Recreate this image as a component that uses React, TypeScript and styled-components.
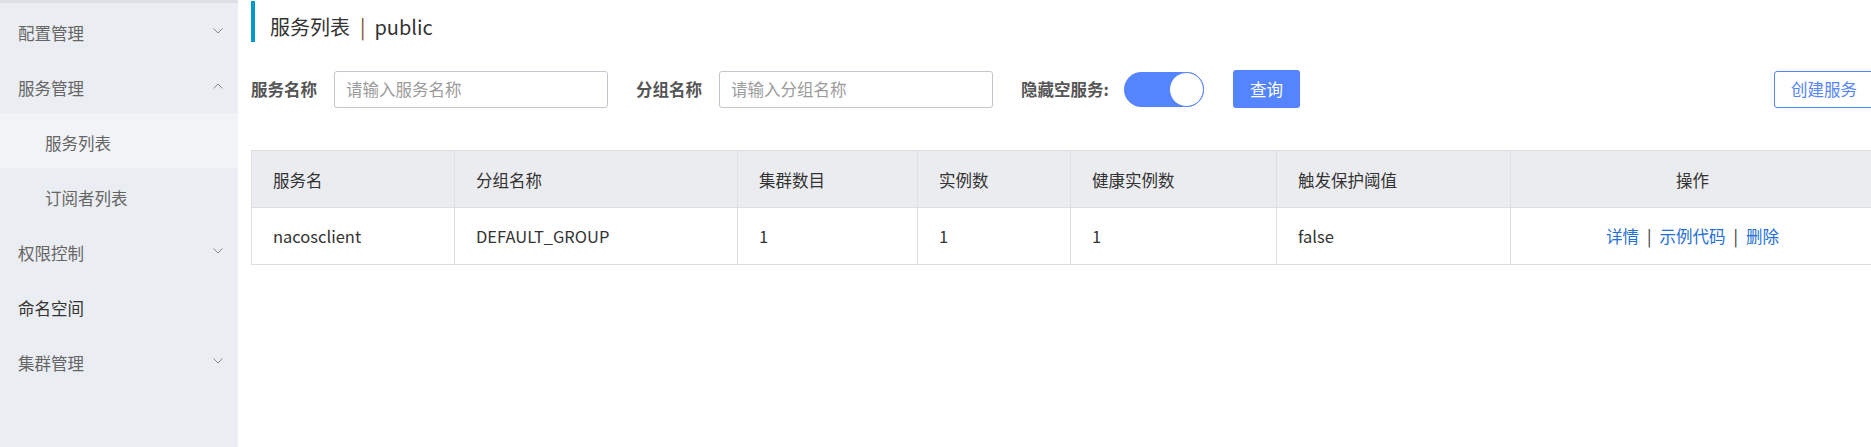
import React from "react";
import styled, { createGlobalStyle } from "styled-components";

const GlobalStyle = createGlobalStyle`
  html, body { margin: 0; padding: 0; background: #fff; overflow: hidden; }
  body { font-family: "Noto Sans CJK SC", "Noto Sans", sans-serif; color: #333; }
  * { box-sizing: border-box; }
`;

const Layout = styled.div`
  display: flex;
  width: 1874px;
  height: 447px;
`;

const Sidebar = styled.nav`
  width: 238px;
  flex: none;
  background: #eaedf1;
  border-top: 3px solid #dcdfe5;
  display: flex;
  flex-direction: column;
`;

const MenuItem = styled.div<{ $sub?: boolean; $active?: boolean; $strong?: boolean }>`
  height: 55px;
  flex: none;
  display: flex;
  align-items: center;
  justify-content: space-between;
  padding: 4px 15px 0 ${(p) => (p.$sub ? 45 : 18)}px;
  background: ${(p) => (p.$active ? "#f2f3f7" : "transparent")};
  font-size: 16.5px;
  color: ${(p) => (p.$strong ? "#333" : "#666")};
  cursor: pointer;
`;

const Chevron = styled.svg`
  width: 10px;
  height: 6px;
  margin-top: -4px;
  flex: none;
`;

const Main = styled.main`
  flex: 1;
  min-width: 0;
  padding: 1px 0 0 13px;
  display: flex;
  flex-direction: column;
`;

const Title = styled.div`
  height: 41px;
  border-left: 4px solid #0099cc;
  padding: 11px 0 0 15px;
  line-height: 30px;
  font-size: 20px;
  color: #333;
  display: flex;
`;

const TitleSep = styled.span`
  margin: 0 9px 0 10px;
  color: #7b4b1e;
`;

const SearchRow = styled.div`
  display: flex;
  align-items: center;
  height: 38px;
  margin-top: 28px;
`;

const Label = styled.span<{ $gap?: number }>`
  font-size: 16.5px;
  font-weight: bold;
  color: #555;
  margin-right: ${(p) => p.$gap ?? 17}px;
  white-space: nowrap;
`;

const Input = styled.input`
  width: 274px;
  height: 37px;
  border: 1px solid #c4c6cf;
  border-radius: 3px;
  padding: 0 11px;
  font-size: 16.5px;
  font-family: inherit;
  color: #333;
  margin-right: 28px;
  outline: none;
  &::placeholder { color: #9c9c9c; }
`;

const Switch = styled.div`
  width: 80px;
  height: 35px;
  border-radius: 18px;
  background: #5584ff;
  display: flex;
  justify-content: flex-end;
  margin-right: 29px;
  flex: none;
`;

const Knob = styled.span`
  width: 35px;
  height: 35px;
  border-radius: 50%;
  background: #fff;
  border: 1px solid #5584ff;
`;

const PrimaryButton = styled.button`
  height: 38px;
  padding: 0 17px;
  background: #5584ff;
  color: #fff;
  border: none;
  border-radius: 3px;
  font-size: 16.5px;
  font-family: inherit;
  flex: none;
`;

const OutlineButton = styled.button`
  margin-left: auto;
  height: 37px;
  padding: 0 16px;
  background: #fff;
  color: #5584ff;
  border: 1px solid #5584ff;
  border-radius: 3px;
  font-size: 16.5px;
  font-family: inherit;
  flex: none;
  white-space: nowrap;
`;

const Table = styled.table`
  margin-top: 42px;
  width: 100%;
  border-collapse: collapse;
  table-layout: fixed;
  font-size: 16.5px;
  color: #333;
`;

const Th = styled.th<{ $center?: boolean }>`
  height: 57px;
  background: #ebecf0;
  border: 1px solid #dcdee3;
  font-weight: normal;
  text-align: ${(p) => (p.$center ? "center" : "left")};
  padding: 2px 21px 0;
  white-space: nowrap;
`;

const Td = styled.td<{ $center?: boolean }>`
  height: 57px;
  border: 1px solid #dcdee3;
  text-align: ${(p) => (p.$center ? "center" : "left")};
  padding: 0 21px;
  white-space: nowrap;
`;

const Link = styled.a`
  color: #2470d8;
  text-decoration: none;
  cursor: pointer;
`;

const LinkSep = styled.span`
  margin: 0 8px;
  color: #333;
`;

const Down = () => (
  <Chevron viewBox="0 0 10 6">
    <polyline points="0.5,0.5 5,5 9.5,0.5" fill="none" stroke="#888" strokeWidth="1" />
  </Chevron>
);

const Up = () => (
  <Chevron viewBox="0 0 10 6">
    <polyline points="0.5,5.5 5,1 9.5,5.5" fill="none" stroke="#888" strokeWidth="1" />
  </Chevron>
);

const colWidths = [203, 283, 180, 153, 206, 234, 364];
const headers = ["服务名", "分组名称", "集群数目", "实例数", "健康实例数", "触发保护阈值"];
const row = ["nacosclient", "DEFAULT_GROUP", "1", "1", "1", "false"];

export default function App() {
  return (
    <>
      <GlobalStyle />
      <Layout>
        <Sidebar>
          <MenuItem>
            配置管理
            <Down />
          </MenuItem>
          <MenuItem>
            服务管理
            <Up />
          </MenuItem>
          <MenuItem $sub $active>服务列表</MenuItem>
          <MenuItem $sub>订阅者列表</MenuItem>
          <MenuItem>
            权限控制
            <Down />
          </MenuItem>
          <MenuItem $strong>命名空间</MenuItem>
          <MenuItem>
            集群管理
            <Down />
          </MenuItem>
        </Sidebar>
        <Main>
          <Title>
            <span>服务列表</span>
            <TitleSep>|</TitleSep>
            <span>public</span>
          </Title>
          <SearchRow>
            <Label>服务名称</Label>
            <Input placeholder="请输入服务名称" />
            <Label>分组名称</Label>
            <Input placeholder="请输入分组名称" />
            <Label $gap={15}>隐藏空服务:</Label>
            <Switch>
              <Knob />
            </Switch>
            <PrimaryButton>查询</PrimaryButton>
            <OutlineButton>创建服务</OutlineButton>
          </SearchRow>
          <Table>
            <colgroup>
              {colWidths.map((w, i) => (
                <col key={i} style={{ width: w }} />
              ))}
            </colgroup>
            <thead>
              <tr>
                {headers.map((h) => (
                  <Th key={h}>{h}</Th>
                ))}
                <Th $center>操作</Th>
              </tr>
            </thead>
            <tbody>
              <tr>
                {row.map((c, i) => (
                  <Td key={i}>{c}</Td>
                ))}
                <Td $center>
                  <Link>详情</Link>
                  <LinkSep>|</LinkSep>
                  <Link>示例代码</Link>
                  <LinkSep>|</LinkSep>
                  <Link>删除</Link>
                </Td>
              </tr>
            </tbody>
          </Table>
        </Main>
      </Layout>
    </>
  );
}
